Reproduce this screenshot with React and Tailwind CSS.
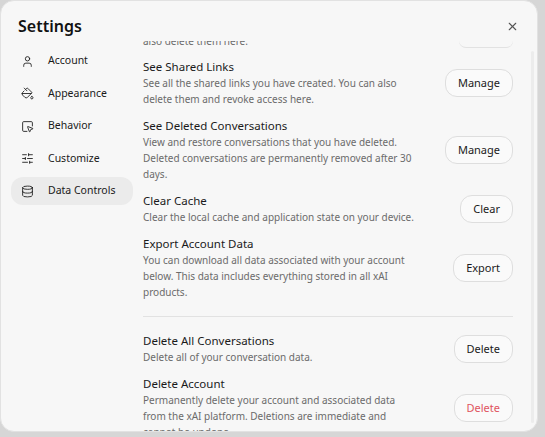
import {X, User, PaintBucket, SquareMousePointer, SlidersHorizontal, Database} from 'lucide-react';

const nav = [
	{label: 'Account', icon: User},
	{label: 'Appearance', icon: PaintBucket},
	{label: 'Behavior', icon: SquareMousePointer},
	{label: 'Customize', icon: SlidersHorizontal},
	{label: 'Data Controls', icon: Database, active: true},
];

const Row = ({title, desc, action, danger}) => (
	<div className="flex items-center justify-between gap-4">
		<div className="w-[272px]">
			<div className="text-[11.5px] leading-4 text-[#1a1a1a]">{title}</div>
			<div className="text-[10px] leading-4 text-[#6b6b6b]">{desc}</div>
		</div>
		<button
			className={`h-[28px] px-3 rounded-xl border border-[#dedede] bg-[#fafafa] text-[11px] ${danger ? 'text-[#e0555f]' : 'text-[#1a1a1a]'}`}
		>
			{action}
		</button>
	</div>
);

const App = () => {
	return (
		<div className="w-[545px] h-[437px] bg-[#d6d6d6] font-[Inter,'Liberation_Sans',sans-serif] overflow-hidden">
			<div className="w-[538px] h-[432px] bg-[#f7f7f7] rounded-[14px] border border-[#e2e2e2] flex flex-col relative">
				<div className="flex items-center justify-between pl-[17px] pr-[18px] pt-[10px] h-[40px]">
					<h1 className="text-[16px] font-semibold text-[#111]">Settings</h1>
					<X size={13} className="text-[#555]" />
				</div>
				<div className="flex flex-1 min-h-0">
					<nav className="w-[132px] pl-[10px] pt-[6px] flex flex-col gap-[4.5px]">
						{nav.map(({label, icon: Icon, active}) => (
							<div
								key={label}
								className={`h-[28px] flex items-center gap-[14px] px-[10px] rounded-xl text-[10.5px] text-[#1a1a1a] ${active ? 'bg-[#ebebeb]' : ''}`}
							>
								<Icon size={13} strokeWidth={1.6} />
								{label}
							</div>
						))}
					</nav>
					<div className="flex-1 min-h-0 overflow-hidden pl-[10px] pr-[24px] relative">
						<div className="-mt-[7px] flex flex-col gap-[11px]">
							<div className="flex items-center justify-between h-[14px]">
								<div className="text-[10px] leading-4 text-[#6b6b6b]">also delete them here.</div>
								<div className="w-[54px] h-[14px] border-b border-[#e2e2e2] rounded-xl" />
							</div>
							<Row title="See Shared Links" desc="See all the shared links you have created. You can also delete them and revoke access here." action="Manage" />
							<Row title="See Deleted Conversations" desc="View and restore conversations that you have deleted. Deleted conversations are permanently removed after 30 days." action="Manage" />
							<Row title="Clear Cache" desc="Clear the local cache and application state on your device." action="Clear" />
							<Row title="Export Account Data" desc="You can download all data associated with your account below. This data includes everything stored in all xAI products." action="Export" />
							<div className="border-t border-[#e2e2e2] my-[5px]" />
							<Row title="Delete All Conversations" desc="Delete all of your conversation data." action="Delete" />
							<Row title="Delete Account" desc="Permanently delete your account and associated data from the xAI platform. Deletions are immediate and cannot be undone." action="Delete" danger />
						</div>
						<div className="absolute right-[3px] top-[10px] bottom-[8px] w-[3px] rounded bg-[#ececec]" />
					</div>
				</div>
			</div>
		</div>
	);
};

export default App;
